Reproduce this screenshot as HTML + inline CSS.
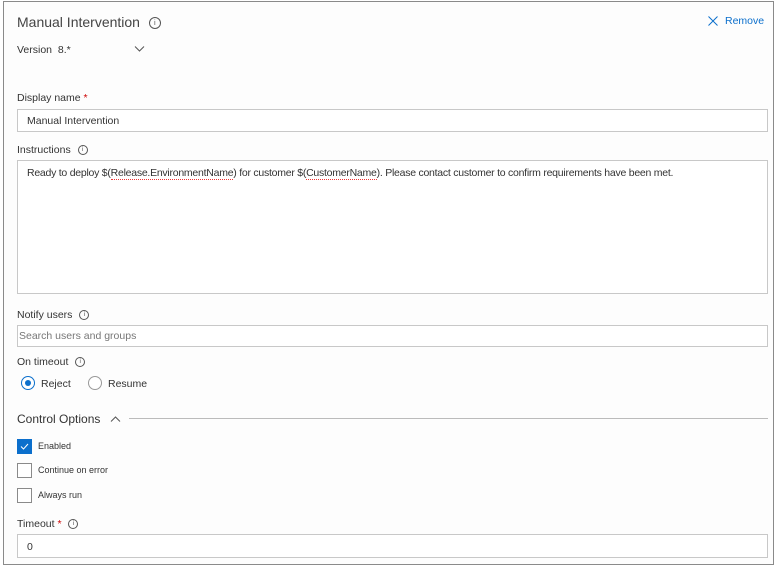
<!DOCTYPE html>
<html><head><style>
body{margin:0;width:779px;height:569px;background:#fff;font-family:"Liberation Sans",sans-serif;color:#333;position:relative;overflow:hidden}
.a{position:absolute;white-space:nowrap}
.frame{position:absolute;left:3px;top:1px;width:769px;height:562px;border:1px solid #8a8a8a;background:#fdfdfd}
.lbl{font-size:10.5px;color:#333}
.inp{position:absolute;left:17px;width:749px;border:1px solid #c8c8c8;background:#fff;font-size:10.5px}
.info{display:inline-block;width:8px;height:8px;border:1px solid #555;border-radius:50%;font-size:6.5px;line-height:8px;text-align:center;vertical-align:middle;margin-left:4px;color:#555}
.cb{position:absolute;left:17px;width:13px;height:13px;border:1px solid #8a8a8a;background:#fff}
.red{border-bottom:1px dotted #e33}
</style></head><body>
<div class="frame"></div>
<div class="a" style="left:17px;top:14px;font-size:14px;color:#444">Manual Intervention <span class="info" style="width:10px;height:10px;line-height:10px;font-size:7.5px;margin-left:5px">i</span></div>
<svg class="a" style="left:708px;top:16px" width="10" height="10"><path d="M0.5 0.5L9.5 9.5M9.5 0.5L0.5 9.5" stroke="#0b6fcc" fill="none"/></svg>
<div class="a" style="left:725px;top:15px;font-size:10.5px;color:#0b6fcc">Remove</div>
<div class="a lbl" style="left:17px;top:44px">Version &nbsp;8.*</div>
<svg class="a" style="left:134px;top:45px" width="11" height="8"><path d="M1 1.5L5.5 6L10 1.5" stroke="#555" fill="none"/></svg>
<div class="a lbl" style="left:17px;top:92px">Display name <span style="color:#c00">*</span></div>
<div class="inp" style="top:109px;height:21px;line-height:23px;padding-left:9px;width:740px">Manual Intervention</div>
<div class="a lbl" style="left:17px;top:144px">Instructions <span class="info">i</span></div>
<div class="inp" style="top:160px;height:132px;padding-left:9px;width:740px"><div style="margin-top:6px;letter-spacing:-0.25px">Ready to deploy $(<span class="red">Release.EnvironmentName</span>) for customer $(<span class="red">CustomerName</span>). Please contact customer to confirm requirements have been met.</div></div>
<div class="a lbl" style="left:17px;top:309px">Notify users <span class="info">i</span></div>
<div class="inp" style="top:325px;height:20px;line-height:21px;padding-left:1px;color:#777;width:748px">Search users and groups</div>
<div class="a lbl" style="left:17px;top:356px">On timeout <span class="info">i</span></div>
<div class="a" style="left:21px;top:376px;width:12px;height:12px;border:1px solid #0b6fcc;border-radius:50%;background:#fff"><div style="margin:3px;width:6px;height:6px;border-radius:50%;background:#0b6fcc"></div></div>
<div class="a lbl" style="left:41px;top:378px">Reject</div>
<div class="a" style="left:88px;top:376px;width:12px;height:12px;border:1px solid #999;border-radius:50%;background:#fff"></div>
<div class="a lbl" style="left:108px;top:378px">Resume</div>
<div class="a" style="left:17px;top:412px;font-size:12px;color:#333">Control Options</div>
<svg class="a" style="left:110px;top:415px" width="11" height="8"><path d="M1 6.5L5.5 2L10 6.5" stroke="#555" fill="none"/></svg>
<div class="a" style="left:129px;top:418px;width:639px;height:1px;background:#bbb"></div>
<div class="cb" style="top:439px;background:#0b6fcc;border-color:#0b6fcc"><svg width="13" height="13"><path d="M3 6.5L5.5 9L10 4" stroke="#fff" fill="none"/></svg></div>
<div class="a" style="left:38px;top:441px;font-size:9px">Enabled</div>
<div class="cb" style="top:463px"></div>
<div class="a" style="left:38px;top:465px;font-size:9px">Continue on error</div>
<div class="cb" style="top:488px"></div>
<div class="a" style="left:38px;top:490px;font-size:9px">Always run</div>
<div class="a lbl" style="left:17px;top:518px">Timeout <span style="color:#c00">*</span> <span class="info">i</span></div>
<div class="inp" style="top:534px;height:22px;line-height:24px;padding-left:9px;width:740px">0</div>
</body></html>
